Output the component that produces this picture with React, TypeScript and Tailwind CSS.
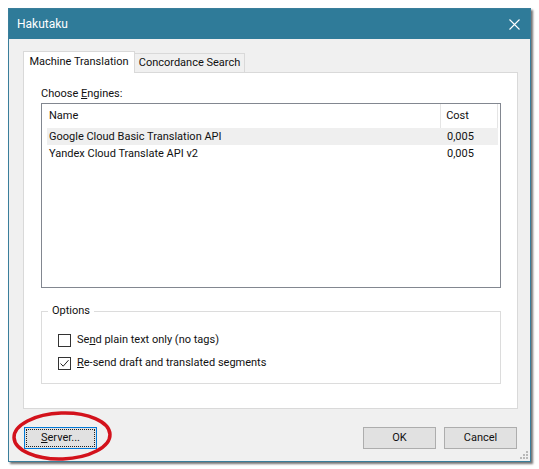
import React from 'react';

// ── Data ──────────────────────────────────────────────────────────────────────

const engines = [
  { name: 'Google Cloud Basic Translation API', cost: '0,005', hot: true },
  { name: 'Yandex Cloud Translate API v2', cost: '0,005', hot: false },
];

// ── Pieces ────────────────────────────────────────────────────────────────────

function Checkbox({ checked }: { checked?: boolean }) {
  return (
    <div className="w-[13px] h-[13px] border border-[#333] bg-white flex items-center justify-center">
      {checked && (
        <svg width="11" height="11" viewBox="0 0 11 11">
          <polyline points="1.5,5.5 4.2,8.2 9.5,2.2" fill="none" stroke="#222" strokeWidth="1" />
        </svg>
      )}
    </div>
  );
}

function Button({ children, focused }: { children: React.ReactNode; focused?: boolean }) {
  return (
    <div
      className={
        focused
          ? 'w-[73px] h-[22px] border border-[#0078d7] bg-[#e1e1e1] p-px'
          : 'w-[73px] h-[22px] border border-[#adadad] bg-[#e1e1e1] p-px'
      }
    >
      <div
        className={
          focused
            ? 'h-full border border-dotted border-[#222] flex items-center justify-center'
            : 'h-full flex items-center justify-center'
        }
      >
        {children}
      </div>
    </div>
  );
}

// ── App ───────────────────────────────────────────────────────────────────────

export default function App() {
  return (
    <div className="relative w-[539px] h-[469px] bg-white pl-2 pt-2 text-[11px] leading-[14px] text-[#111] font-['Roboto',sans-serif]">
      <div className="relative w-[523px] h-[454px] flex flex-col border border-[#3a7e9b] bg-[#f0f0f0] shadow-[2px_2px_2px_rgba(0,0,0,0.55)]">
        {/* Title bar */}
        <div className="h-[30px] bg-[#2f7b99] flex items-center justify-between pl-[8px] pr-[10px]">
          <span className="text-white text-[12px]">Hakutaku</span>
          <svg width="11" height="11" viewBox="0 0 11 11">
            <path d="M0.5 0.5 L10.5 10.5 M10.5 0.5 L0.5 10.5" stroke="#fff" strokeWidth="1.1" />
          </svg>
        </div>

        {/* Body */}
        <div className="flex-1 flex flex-col pl-[14px] pr-[12px] pt-[12px]">
          {/* Tabs */}
          <div className="flex items-end h-[21px]">
            <div className="relative z-10 -mb-px h-[22px] w-[112px] bg-white border border-b-0 border-[#d9d9d9] flex items-center justify-center pb-px">
              Machine Translation
            </div>
            <div className="-ml-px h-[19px] w-[111px] bg-[#f0f0f0] border border-b-0 border-[#d9d9d9] flex items-center justify-center">
              Concordance Search
            </div>
          </div>

          {/* Tab panel */}
          <div className="h-[337px] bg-white border border-[#d9d9d9] pl-[17px] pt-[14px]">
            <div>
              Choose <span className="underline">E</span>ngines:
            </div>

            {/* Engine list */}
            <div className="mt-[2px] w-[460px] h-[185px] border border-[#828790] bg-white pl-[5px] pr-[2px]">
              <div className="flex h-[24px]">
                <div className="w-[394px] flex items-center pl-[2px]">Name</div>
                <div className="w-px bg-[#e5e5e5]" />
                <div className="w-[56px] flex items-center pl-[5px]">Cost</div>
                <div className="w-px bg-[#e5e5e5]" />
              </div>
              {engines.map((e) => (
                <div key={e.name} className={e.hot ? 'flex h-[17px] items-center bg-[#efefef]' : 'flex h-[17px] items-center'}>
                  <div className="w-[395px] pl-[2px]">{e.name}</div>
                  <div className="pl-[5px]">{e.cost}</div>
                </div>
              ))}
            </div>

            {/* Options group */}
            <div className="mt-[23px] w-[460px] h-[73px] border border-[#dcdcdc] pl-[16px]">
              <div className="-mt-[8px] -ml-[10px] w-fit bg-white px-[4px]">Options</div>
              <div className="mt-[15px] flex items-center gap-[6px]">
                <Checkbox />
                <span>
                  Se<span className="underline">n</span>d plain text only (no tags)
                </span>
              </div>
              <div className="mt-[9px] flex items-center gap-[6px]">
                <Checkbox checked />
                <span>
                  <span className="underline">R</span>e-send draft and translated segments
                </span>
              </div>
            </div>
          </div>

          {/* Footer buttons */}
          <div className="mt-[18px] flex items-center pl-px pr-px">
            <Button focused>
              <span>
                <span className="underline">S</span>erver...
              </span>
            </Button>
            <div className="ml-auto flex gap-[8px]">
              <Button>OK</Button>
              <Button>Cancel</Button>
            </div>
          </div>
        </div>

        {/* Size grip */}
        <svg className="absolute right-[2px] bottom-[2px]" width="8" height="8" viewBox="0 0 8 8">
          <g fill="#b8b8b8">
            <rect x="6" y="0" width="2" height="2" />
            <rect x="3" y="3" width="2" height="2" />
            <rect x="6" y="3" width="2" height="2" />
            <rect x="0" y="6" width="2" height="2" />
            <rect x="3" y="6" width="2" height="2" />
            <rect x="6" y="6" width="2" height="2" />
          </g>
        </svg>
      </div>

      {/* Red annotation ellipse */}
      <svg className="absolute left-[11px] top-[410px] pointer-events-none" width="104" height="54" viewBox="0 0 104 54">
        <ellipse cx="51" cy="26" rx="48" ry="23" fill="none" stroke="#d3121c" strokeWidth="3.5" transform="rotate(-2 51 26)" />
      </svg>
    </div>
  );
}
